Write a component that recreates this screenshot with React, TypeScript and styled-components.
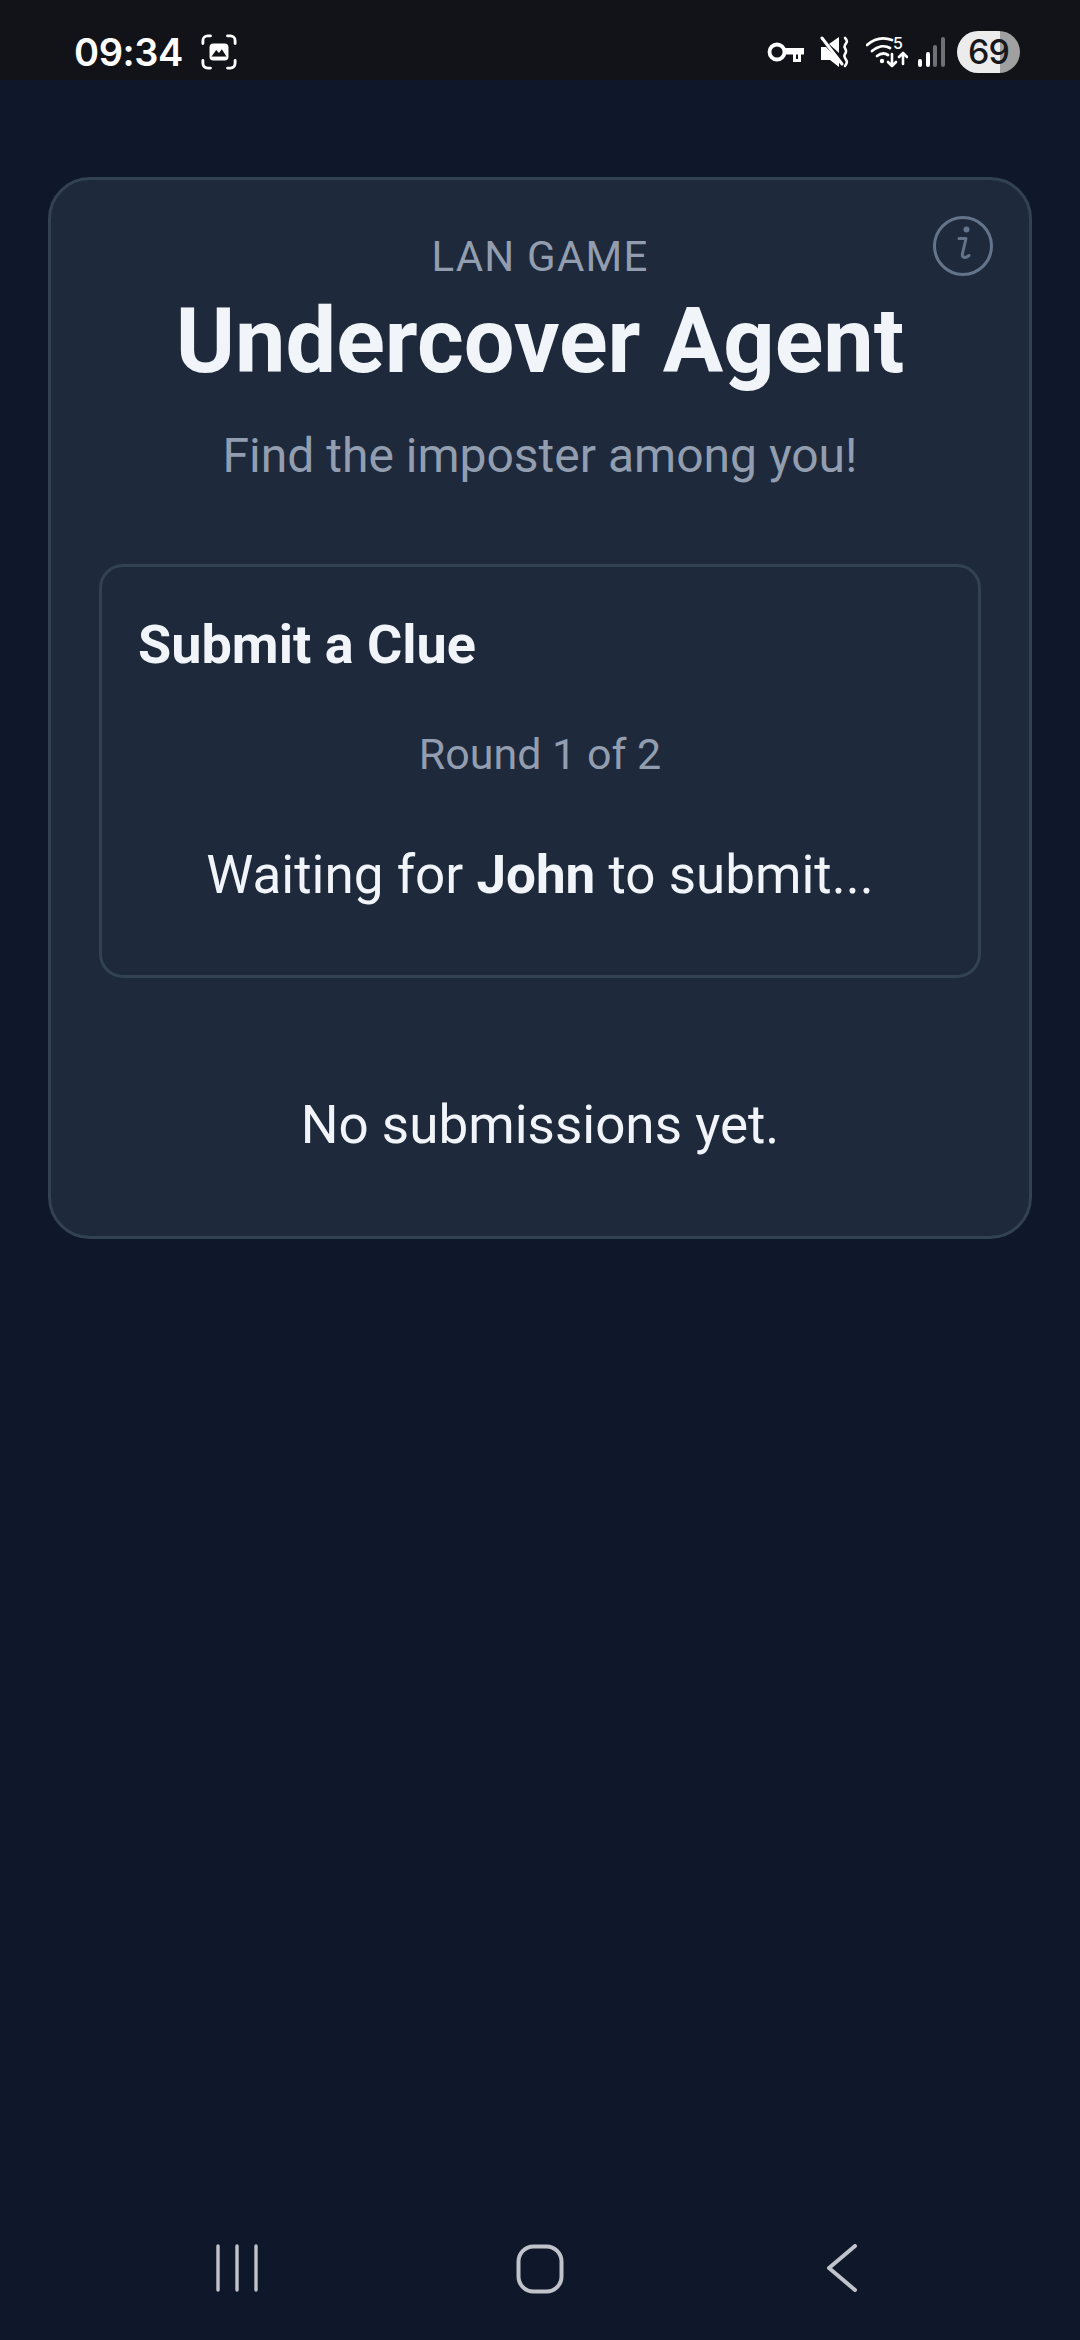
import styled, { createGlobalStyle } from 'styled-components';

const GlobalStyle = createGlobalStyle`
  html, body {
    margin: 0;
    padding: 0;
    background: #0f172a;
  }
  * {
    box-sizing: border-box;
  }
`;

const Page = styled.div`
  width: 1080px;
  height: 2340px;
  display: flex;
  flex-direction: column;
  background: #0f172a;
  font-family: Roboto, 'Liberation Sans', sans-serif;
  color: #f1f5f9;
`;

const StatusBar = styled.div`
  height: 80px;
  flex: none;
  background: #121318;
  display: flex;
  align-items: center;
  justify-content: space-between;
  padding: 24px 60px 0 74px;
  color: #fff;
`;

const StatusGroup = styled.div<{ $gap: number }>`
  display: flex;
  align-items: center;
  gap: ${({ $gap }) => $gap}px;
`;

const Clock = styled.span`
  font-family: Inter, Roboto, sans-serif;
  font-size: 38px;
  font-weight: 600;
  line-height: 1;
  letter-spacing: -0.4px;
`;

const WifiSlot = styled.div`
  position: relative;
  display: flex;
`;

const WifiBadge = styled.span`
  position: absolute;
  top: -1px;
  left: 27px;
  font-family: Inter, Roboto, sans-serif;
  font-size: 16px;
  font-weight: 500;
  line-height: 16px;
  color: #fff;
`;

const Battery = styled.div`
  width: 63px;
  height: 42px;
  border-radius: 21px;
  background: linear-gradient(to right, #ececec 0 68%, #a0a0a0 68% 100%);
  color: #16181d;
  font-family: Inter, Roboto, sans-serif;
  font-size: 34px;
  font-weight: 500;
  line-height: 42px;
  text-align: center;
  letter-spacing: -1px;
`;

const Main = styled.main`
  flex: 1;
  padding: 97px 48px 0;
`;

const Card = styled.section`
  position: relative;
  height: 1062px;
  background: #1e293b;
  border: 3px solid #334155;
  border-radius: 42px;
  padding: 52px 48px 0;
  text-align: center;
`;

const InfoButton = styled.button`
  position: absolute;
  top: 36px;
  right: 36px;
  width: 60px;
  height: 60px;
  padding: 0;
  background: none;
  border: 0;
  color: #64748b;
`;

const Eyebrow = styled.div`
  font-size: 42px;
  line-height: 50px;
  color: #929eb0;
  letter-spacing: 1.2px;
`;

const Title = styled.h1`
  margin: 0;
  font-size: 90px;
  font-weight: 700;
  line-height: 120px;
  color: #f1f5f9;
`;

const Subtitle = styled.p`
  margin: 26px 0 0;
  font-size: 48px;
  line-height: 56px;
  color: #929eb0;
`;

const Panel = styled.div`
  margin-top: 80px;
  height: 414px;
  border: 3px solid #334155;
  border-radius: 24px;
  padding: 46px 36px 0;
`;

const PanelTitle = styled.h2`
  margin: 0;
  text-align: left;
  font-size: 54px;
  line-height: 64px;
  font-weight: 700;
  color: #f1f5f9;
`;

const RoundLabel = styled.p`
  margin: 52px 0 0;
  font-size: 43px;
  line-height: 50px;
  color: #929eb0;
`;

const Waiting = styled.p`
  margin: 66px 0 0;
  font-size: 53px;
  line-height: 60px;
  color: #f1f5f9;
`;

const Empty = styled.p`
  margin: 117px 0 0;
  font-size: 53px;
  line-height: 60px;
  color: #f1f5f9;
`;

const NavBar = styled.nav`
  flex: none;
  height: 130px;
  display: grid;
  grid-template-columns: repeat(3, 302px);
  justify-content: center;
  align-items: start;
  justify-items: center;
  padding: 34px 0 0;
  color: #c0c3c9;
`;

const FrameIcon = () => (
  <svg width="36" height="36" viewBox="0 0 38 38" fill="none">
    <path
      d="M10 2H7a5 5 0 0 0-5 5v3M28 2h3a5 5 0 0 1 5 5v3M10 36H7a5 5 0 0 1-5-5v-3M28 36h3a5 5 0 0 0 5-5v-3"
      stroke="#fff"
      strokeWidth="3"
      strokeLinecap="round"
    />
    <rect x="9" y="10" width="20" height="18" rx="4" fill="#fff" />
    <path d="M11 24l5-7 3 3 3-4 5 8z" fill="#121318" />
    <path d="M11 24h16v2H11z" fill="#fff" />
  </svg>
);

const KeyIcon = () => (
  <svg width="37" height="21" viewBox="0 0 37 21" fill="none">
    <circle cx="10" cy="10" r="7.5" stroke="#fff" strokeWidth="3.8" />
    <path d="M17 6h20v6.5h-3V20h-8v-7.5H17z" fill="#fff" />
    <path d="M29 12.5h2V17h-2z" fill="#121318" />
  </svg>
);

const MuteIcon = () => (
  <svg width="30" height="32" viewBox="0 0 30 32" fill="none">
    <path d="M1 11h5l13 13v7l-9-7H1z" fill="#fff" />
    <path d="M9 8l10-7v16z" fill="#fff" />
    <path d="M2 2l20 26" stroke="#fff" strokeWidth="3" strokeLinecap="round" />
    <path
      d="M25 2c3 3 2 4 0 7s2 4 1 7-3 3-1 6 3 4 0 8"
      stroke="#fff"
      strokeWidth="2.6"
      strokeLinecap="round"
    />
  </svg>
);

const WifiIcon = () => (
  <svg width="42" height="32" viewBox="0 0 42 32" fill="none">
    <path d="M1 9c8-7 17-8 25-5" stroke="#fff" strokeWidth="2.8" strokeLinecap="round" />
    <path d="M6 15c6-5 13-6 18-3" stroke="#fff" strokeWidth="2.8" strokeLinecap="round" />
    <path d="M11 20c4-3 8-3 11-1" stroke="#fff" strokeWidth="2.8" strokeLinecap="round" />
    <circle cx="16" cy="25" r="2.2" fill="#fff" />
    <path d="M26 18v12m-4-4l4 4 4-4" stroke="#fff" strokeWidth="2.6" strokeLinecap="round" strokeLinejoin="round" />
    <path d="M37 28V17m-4 4l4-4 4 4" stroke="#fff" strokeWidth="2.6" strokeLinecap="round" strokeLinejoin="round" />
  </svg>
);

const SignalIcon = () => (
  <svg width="27" height="30" viewBox="0 0 27 30">
    <rect x="0" y="22" width="4" height="8" rx="2" fill="#fff" />
    <rect x="8" y="15" width="4" height="15" rx="2" fill="#fff" />
    <rect x="15" y="8" width="4" height="22" rx="2" fill="#6f7074" />
    <rect x="23" y="0" width="4" height="30" rx="2" fill="#6f7074" />
  </svg>
);

const InfoIcon = () => (
  <svg width="60" height="60" viewBox="0 0 60 60" fill="none">
    <circle cx="30" cy="30" r="28.5" stroke="currentColor" strokeWidth="3" />
    <circle cx="33.5" cy="13.5" r="3" fill="currentColor" />
    <path
      d="M26 22.5h7L29.500 37.500c-1 4.500 3 5 6.500 2"
      stroke="currentColor"
      strokeWidth="3"
      strokeLinecap="round"
      strokeLinejoin="round"
    />
  </svg>
);

const RecentsIcon = () => (
  <svg width="46" height="48" viewBox="0 0 46 48">
    <path d="M3 2v44M22 2v44M41 2v44" stroke="currentColor" strokeWidth="3.4" strokeLinecap="round" />
  </svg>
);

const HomeIcon = () => (
  <svg width="48" height="50" viewBox="0 0 48 50" fill="none">
    <rect x="2.5" y="2.5" width="43" height="45" rx="15" stroke="currentColor" strokeWidth="4" />
  </svg>
);

const BackIcon = () => (
  <svg width="32" height="48" viewBox="0 0 32 48" fill="none">
    <path d="M29 2L3 24l26 22" stroke="currentColor" strokeWidth="4" strokeLinecap="round" strokeLinejoin="round" />
  </svg>
);

const App = () => {
  return (
    <Page>
      <GlobalStyle />
      <StatusBar>
        <StatusGroup $gap={18}>
          <Clock>09:34</Clock>
          <FrameIcon />
        </StatusGroup>
        <StatusGroup $gap={10}>
          <StatusGroup $gap={16}>
            <KeyIcon />
            <MuteIcon />
            <WifiSlot>
              <WifiIcon />
              <WifiBadge>5</WifiBadge>
            </WifiSlot>
          </StatusGroup>
          <StatusGroup $gap={12}>
            <SignalIcon />
            <Battery>69</Battery>
          </StatusGroup>
        </StatusGroup>
      </StatusBar>
      <Main>
        <Card>
          <InfoButton aria-label="Info">
            <InfoIcon />
          </InfoButton>
          <Eyebrow>LAN GAME</Eyebrow>
          <Title>Undercover Agent</Title>
          <Subtitle>Find the imposter among you!</Subtitle>
          <Panel>
            <PanelTitle>Submit a Clue</PanelTitle>
            <RoundLabel>Round 1 of 2</RoundLabel>
            <Waiting>
              Waiting for <strong>John</strong> to submit...
            </Waiting>
          </Panel>
          <Empty>No submissions yet.</Empty>
        </Card>
      </Main>
      <NavBar>
        <RecentsIcon />
        <HomeIcon />
        <BackIcon />
      </NavBar>
    </Page>
  );
};

export default App;
